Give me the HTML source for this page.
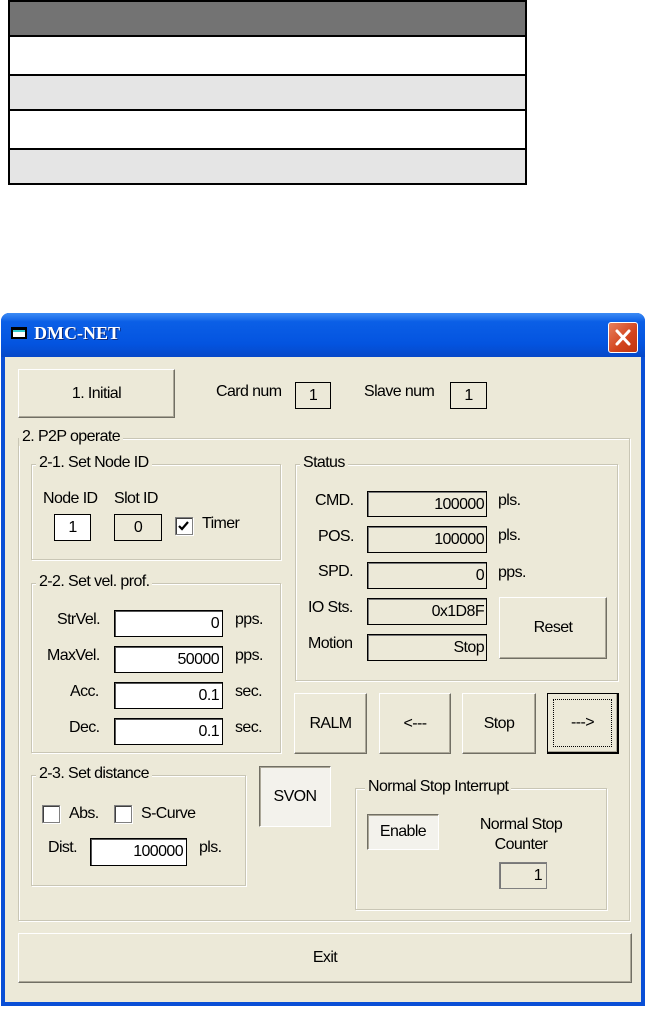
<!DOCTYPE html>
<html><head><meta charset="utf-8"><style>
*{margin:0;padding:0;box-sizing:border-box}
body{width:648px;height:1009px;background:#fff;position:relative;overflow:hidden;font-family:"Liberation Sans",sans-serif;font-size:16px;letter-spacing:-0.6px;color:#000}
.a{position:absolute}
.win{position:absolute;left:1px;top:313px;width:644px;height:693px;background:#0a4fd6;border-radius:8px 8px 0 0}
.title{position:absolute;left:0;top:0;width:100%;height:44px;border-radius:8px 8px 0 0;background:linear-gradient(#3d8cf5,#0b5fe6 20%,#0454e0 70%,#0648c8)}
.client{position:absolute;left:4px;top:44px;right:4px;bottom:4px;background:#ece9d8}
.btn{position:absolute;background:#ece9d8;border-top:1px solid #fff;border-left:1px solid #fff;border-right:1px solid #716f64;border-bottom:1px solid #716f64;box-shadow:inset -1px -1px 0 #aca899;display:flex;align-items:center;justify-content:center}
.grp{position:absolute;border:1px solid #c9c6b5;box-shadow:inset 1px 1px 0 #fff,1px 1px 0 #fff}
.lg{position:absolute;top:-11px;left:8px;background:#ece9d8;padding:0 3px;white-space:nowrap}
.ro{position:absolute;border:1px solid #000;background:#ece9d8;box-shadow:inset 1px 1px 0 #777;text-align:right;padding-right:2px;line-height:25px}
.in{position:absolute;border:1px solid #000;background:#fff;box-shadow:inset 1px 1px 0 #555;text-align:right;padding-right:3px;line-height:25px}
.cb{position:absolute;width:18px;height:18px;background:#fff;border:1px solid #808080;box-shadow:inset 1px 1px 0 #404040,1px 1px 0 #fff}
.t{position:absolute;white-space:nowrap}
</style></head><body>
<div class="a" style="left:8px;top:0;width:519px;height:185px;border:2px solid #000;background:#fff"></div>
<div class="a" style="left:8px;top:0;width:519px;height:37px;background:#737373;border:2px solid #000"></div>
<div class="a" style="left:8px;top:74px;width:519px;height:37px;background:#e5e5e5;border:2px solid #000"></div>
<div class="a" style="left:8px;top:148px;width:519px;height:37px;background:#e5e5e5;border:2px solid #000"></div>

<div class="win">
 <div class="title">
  <div class="a" style="left:10px;top:14px;width:16px;height:12px;background:#fff;border:2px solid #000;border-top-width:3px;box-shadow:inset 0 2px 0 #3cc"></div>
  <div class="t" style="left:33px;top:10px;color:#fff;font-family:'Liberation Serif',serif;font-weight:bold;font-size:18px;letter-spacing:0;text-shadow:1px 1px 0 #0a2a80">DMC-NET</div>
  <div class="a" style="left:607px;top:9px;width:30px;height:31px;border:1px solid #fff;border-radius:3px;background:linear-gradient(135deg,#e8805e,#d2431c 60%,#c0350f)">
   <svg width="28" height="29" style="position:absolute;left:0;top:0"><path d="M8 8L20 21M20 8L8 21" stroke="#fff" stroke-width="3" stroke-linecap="round"/></svg>
  </div>
 </div>
 <div class="client"></div>
</div>

<div class="btn" style="left:18px;top:369px;width:157px;height:49px">1. Initial</div>
<div class="t" style="left:216px;top:383px">Card num</div>
<div class="a" style="left:295px;top:382px;width:36px;height:27px;border:1px solid #000;text-align:center;line-height:25px">1</div>
<div class="t" style="left:364px;top:383px">Slave num</div>
<div class="a" style="left:450px;top:382px;width:37px;height:27px;border:1px solid #000;text-align:center;line-height:25px">1</div>

<div class="grp" style="left:18px;top:438px;width:612px;height:483px"><div class="lg" style="left:0">2. P2P operate</div></div>

<div class="grp" style="left:31px;top:464px;width:250px;height:96px"><div class="lg" style="left:4px">2-1. Set Node ID</div></div>
<div class="t" style="left:43px;top:490px">Node ID</div>
<div class="t" style="left:114px;top:490px">Slot ID</div>
<div class="a" style="left:54px;top:514px;width:37px;height:27px;border:1px solid #000;background:#fff;text-align:center;line-height:25px">1</div>
<div class="a" style="left:114px;top:514px;width:48px;height:27px;border:1px solid #000;text-align:center;line-height:25px">0</div>
<div class="cb" style="left:175px;top:517px"><svg width="16" height="16" style="position:absolute;left:0;top:0"><path d="M3 8l3 3 6-7" stroke="#000" stroke-width="2.2" fill="none"/></svg></div>
<div class="t" style="left:202px;top:515px">Timer</div>

<div class="grp" style="left:295px;top:464px;width:323px;height:217px"><div class="lg" style="left:4px">Status</div></div>
<div class="t" style="left:315px;top:492px">CMD.</div>
<div class="ro" style="left:367px;top:491px;width:120px;height:26px">100000</div>
<div class="t" style="left:498px;top:492px">pls.</div>
<div class="t" style="left:318px;top:528px">POS.</div>
<div class="ro" style="left:367px;top:526px;width:120px;height:27px">100000</div>
<div class="t" style="left:498px;top:527px">pls.</div>
<div class="t" style="left:318px;top:563px">SPD.</div>
<div class="ro" style="left:367px;top:562px;width:120px;height:27px">0</div>
<div class="t" style="left:498px;top:564px">pps.</div>
<div class="t" style="left:308px;top:599px">IO Sts.</div>
<div class="ro" style="left:367px;top:598px;width:120px;height:27px">0x1D8F</div>
<div class="t" style="left:308px;top:635px">Motion</div>
<div class="ro" style="left:367px;top:634px;width:120px;height:27px">Stop</div>
<div class="btn" style="left:499px;top:597px;width:108px;height:62px">Reset</div>

<div class="grp" style="left:31px;top:583px;width:250px;height:170px"><div class="lg" style="left:4px">2-2. Set vel. prof.</div></div>
<div class="t" style="left:57px;top:611px">StrVel.</div>
<div class="in" style="left:114px;top:610px;width:109px;height:27px">0</div>
<div class="t" style="left:235px;top:611px">pps.</div>
<div class="t" style="left:47px;top:647px">MaxVel.</div>
<div class="in" style="left:114px;top:646px;width:109px;height:27px">50000</div>
<div class="t" style="left:235px;top:647px">pps.</div>
<div class="t" style="left:70px;top:683px">Acc.</div>
<div class="in" style="left:114px;top:682px;width:109px;height:27px">0.1</div>
<div class="t" style="left:235px;top:683px">sec.</div>
<div class="t" style="left:69px;top:719px">Dec.</div>
<div class="in" style="left:114px;top:718px;width:109px;height:27px">0.1</div>
<div class="t" style="left:235px;top:719px">sec.</div>

<div class="btn" style="left:294px;top:693px;width:73px;height:61px">RALM</div>
<div class="btn" style="left:379px;top:693px;width:72px;height:61px">&lt;---</div>
<div class="btn" style="left:462px;top:693px;width:74px;height:61px">Stop</div>
<div class="btn" style="left:547px;top:693px;width:72px;height:61px;border:1px solid #000;border-right:2px solid #000;border-bottom:2px solid #000"><div class="a" style="left:5px;top:5px;right:5px;bottom:5px;border:1px dotted #000"></div>---&gt;</div>

<div class="grp" style="left:31px;top:775px;width:215px;height:111px"><div class="lg" style="left:4px">2-3. Set distance</div></div>
<div class="cb" style="left:42px;top:805px"></div>
<div class="t" style="left:69px;top:805px">Abs.</div>
<div class="cb" style="left:114px;top:805px"></div>
<div class="t" style="left:141px;top:805px">S-Curve</div>
<div class="t" style="left:48px;top:839px">Dist.</div>
<div class="in" style="left:90px;top:838px;width:97px;height:28px">100000</div>
<div class="t" style="left:199px;top:839px">pls.</div>

<div class="btn" style="left:259px;top:766px;width:72px;height:61px;background:#f3f2ec;border-top:1px solid #716f64;border-left:1px solid #716f64;border-right:1px solid #fff;border-bottom:1px solid #fff;box-shadow:inset 1px 1px 0 #aca899">SVON</div>

<div class="grp" style="left:355px;top:788px;width:252px;height:122px"><div class="lg" style="left:9px">Normal Stop Interrupt</div></div>
<div class="btn" style="left:367px;top:814px;width:72px;height:36px;background:#f3f2ec;border-top:1px solid #716f64;border-left:1px solid #716f64;border-right:1px solid #fff;border-bottom:1px solid #fff;box-shadow:inset 1px 1px 0 #aca899">Enable</div>
<div class="t" style="left:471px;top:815px;width:100px;text-align:center;line-height:20px">Normal Stop<br>Counter</div>
<div class="ro" style="left:499px;top:862px;width:48px;height:27px;border-color:#808080;padding-right:4px">1</div>

<div class="btn" style="left:18px;top:933px;width:614px;height:50px">Exit</div>
</body></html>
